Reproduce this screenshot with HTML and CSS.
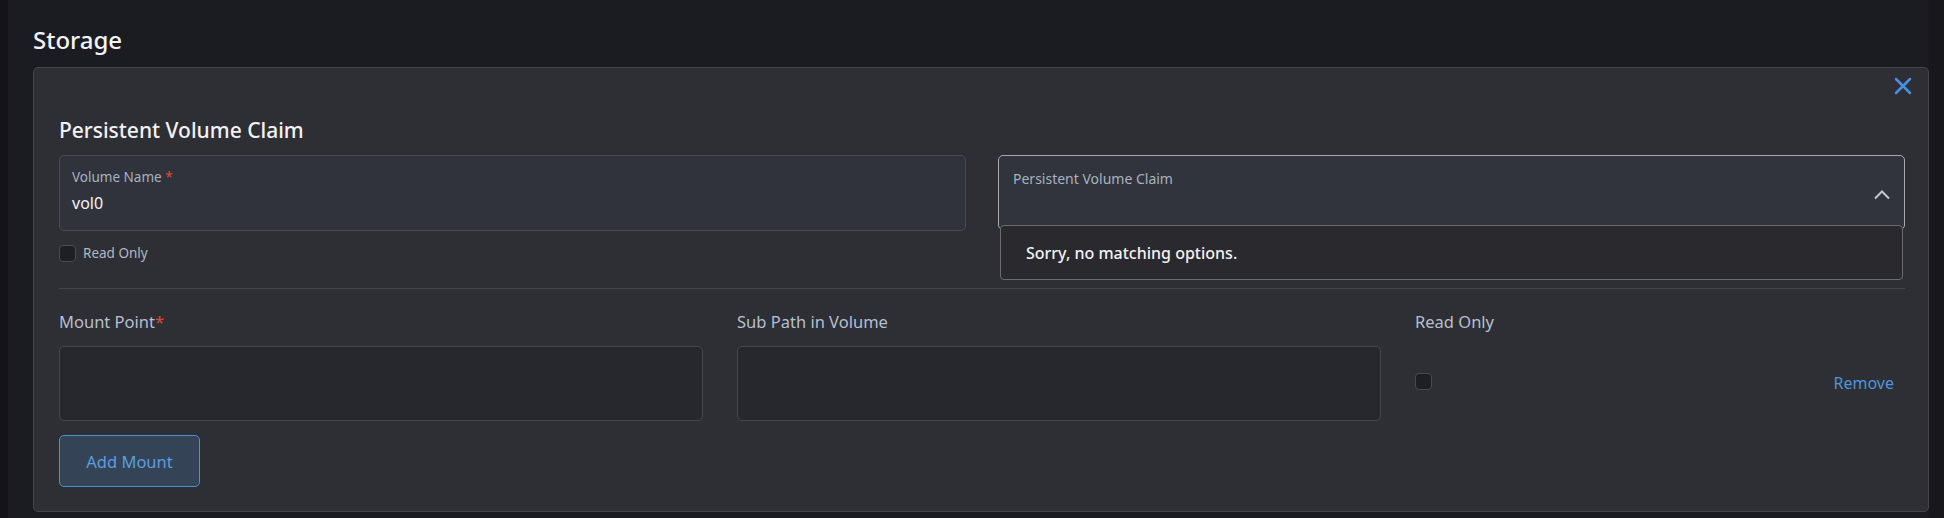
FILE: index.html
```html
<!DOCTYPE html>
<html lang="en">
<head>
    <meta charset="UTF-8">
    <meta name="viewport" content="width=device-width, initial-scale=1.0">
    <title>Storage</title>
    <link rel="stylesheet" href="styles.css">
</head>
<body>
    <div class="page">
        <div class="rail"></div>
        <main class="main">
            <h2 class="page-title">Storage</h2>
            <section class="card">
                <button class="close" aria-label="Close">
                    <svg width="18" height="18" viewBox="0 0 18 18"><path d="M2 2 L16 16 M16 2 L2 16" stroke="currentColor" stroke-width="2.5" stroke-linecap="round"/></svg>
                </button>
                <h3 class="card-title">Persistent Volume Claim</h3>
                <div class="volume-row">
                    <div class="col">
                        <div class="field">
                            <div class="field-label">Volume Name <span class="req">*</span></div>
                            <div class="field-value">vol0</div>
                        </div>
                        <label class="check-line">
                            <span class="checkbox"></span>
                            <span>Read Only</span>
                        </label>
                    </div>
                    <div class="col select-wrap">
                        <div class="field select">
                            <div class="field-label">Persistent Volume Claim</div>
                            <svg class="chevron" width="18" height="11" viewBox="0 0 18 11"><path d="M2 9.5 L9 2.5 L16 9.5" fill="none" stroke="currentColor" stroke-width="2"/></svg>
                        </div>
                        <div class="menu">Sorry, no matching options.</div>
                    </div>
                </div>
                <hr class="divider">
                <div class="mount-row">
                    <div class="mount-col">
                        <div class="mount-label">Mount Point<span class="req">*</span></div>
                        <div class="text-input"></div>
                    </div>
                    <div class="mount-col">
                        <div class="mount-label">Sub Path in Volume</div>
                        <div class="text-input"></div>
                    </div>
                    <div class="mount-col">
                        <div class="mount-label">Read Only</div>
                        <div class="mount-actions">
                            <span class="checkbox"></span>
                            <a class="remove" href="#">Remove</a>
                        </div>
                    </div>
                </div>
                <button class="add-btn">Add Mount</button>
            </section>
        </main>
        <div class="rail-right"></div>
    </div>
</body>
</html>
```

FILE: styles.css
```css
body {
    margin: 0;
    background: #1b1c21;
    color: #e8e9ec;
    font-family: "Noto Sans", "Open Sans", sans-serif;
}
.page {
    display: flex;
    height: 518px;
    overflow: hidden;
}
.rail {
    width: 8px;
    background: #141418;
}
.rail-right {
    width: 15px;
    background: #18181c;
}
.main {
    flex: 1;
    padding: 0 0 0 25px;
}
.page-title {
    margin: 0;
    padding-top: 24px;
    font-size: 24px;
    line-height: 32px;
    font-weight: 500;
    color: #f4f4f6;
    margin-bottom: 11px;
}
.card {
    position: relative;
    background: #2e2f34;
    border: 1px solid #45464b;
    border-radius: 5px;
    padding: 48px 23px 24px 25px;
}
.close {
    position: absolute;
    top: 9px;
    right: 16px;
    background: none;
    border: none;
    padding: 0;
    color: #4a90e2;
    cursor: pointer;
}
.card-title {
    margin: 0 0 11px;
    font-size: 21px;
    line-height: 28px;
    font-weight: 500;
    color: #f2f2f4;
}
.volume-row {
    display: grid;
    grid-template-columns: 1fr 1fr;
    gap: 32px;
}
.field {
    height: 76px;
    box-sizing: border-box;
    background: #31333c;
    border: 1px solid #4a4b52;
    border-radius: 5px;
    padding: 12px 13px 0 12px;
}
.field-label {
    font-size: 13.5px;
    line-height: 18px;
    color: #a9b0bf;
}
.req {
    color: #e0483d;
}
.field-value {
    margin-top: 6px;
    font-size: 16px;
    line-height: 22px;
    color: #f4f4f6;
}
.check-line {
    display: flex;
    align-items: center;
    gap: 7px;
    margin-top: 13px;
    font-size: 13.5px;
    color: #b0b8c8;
}
.checkbox {
    display: inline-block;
    width: 15px;
    height: 15px;
    background: #1e1f24;
    border: 1px solid #4a4b52;
    border-radius: 4px;
}
.select-wrap {
    position: relative;
}
.select {
    position: relative;
    height: 75px;
    background: #32343d;
    border: 1px solid #a8a9ae;
    padding: 14px 14px 0 14px;
}
.select .field-label {
    font-size: 14px;
}
.chevron {
    position: absolute;
    right: 13px;
    top: 33px;
    color: #c4c6cc;
}
.menu {
    position: absolute;
    top: 70px;
    left: 2px;
    right: 2px;
    height: 55px;
    box-sizing: border-box;
    background: #29292e;
    border: 1px solid #6b6c70;
    border-radius: 4px;
    padding: 0 25px;
    display: flex;
    align-items: center;
    font-size: 16px;
    font-weight: 500;
    color: #f2f2f4;
}
.divider {
    margin: 26px 0 0;
    border: none;
    border-top: 1px solid #45464b;
}
.mount-row {
    display: grid;
    grid-template-columns: 644px 644px 1fr;
    gap: 34px;
    margin-top: 22px;
}
.mount-label {
    font-size: 16.5px;
    line-height: 22px;
    color: #b5bfd0;
    margin-bottom: 13px;
}
.text-input {
    height: 75px;
    box-sizing: border-box;
    background: #27282d;
    border: 1px solid #46474c;
    border-radius: 5px;
}
.mount-actions {
    height: 74px;
    display: flex;
    align-items: center;
    justify-content: space-between;
    padding-right: 11px;
}
.mount-actions .checkbox {
    margin-top: -4px;
}
.remove {
    color: #4f93dc;
    text-decoration: none;
    font-size: 16px;
}
.add-btn {
    display: block;
    margin-top: 14px;
    width: 141px;
    height: 52px;
    background: #344456;
    border: 1px solid #4a8fd6;
    border-radius: 5px;
    color: #5a9de0;
    font-family: inherit;
    font-size: 16.5px;
    cursor: pointer;
}
```
